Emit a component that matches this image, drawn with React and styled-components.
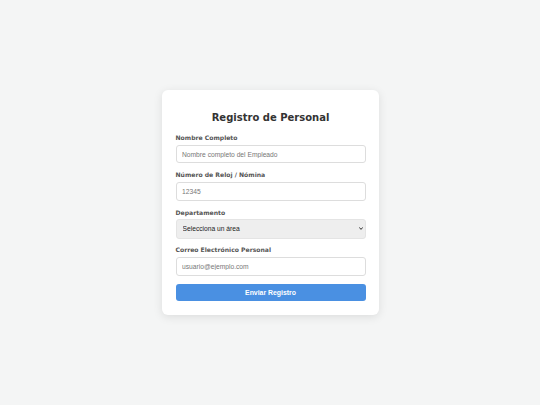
import React from 'react'
import styled, { createGlobalStyle } from 'styled-components'

const GlobalStyle = createGlobalStyle`
    html, body {
        margin: 0;
        padding: 0;
    }
    body {
        background-color: #f4f5f5;
        font-family: 'DejaVu Sans', Verdana, sans-serif;
    }
`;

const Page = styled.div`
    width: 100vw;
    height: 100vh;
    display: flex;
    align-items: center;
    justify-content: center;
`;

const Card = styled.form`
    width: 217px;
    box-sizing: border-box;
    background-color: #ffffff;
    border-radius: 6px;
    box-shadow: 0 2px 10px rgba(0, 0, 0, 0.1);
    padding: 21.5px 13px 13.5px 14px;
    display: flex;
    flex-direction: column;
`;

const Title = styled.h2`
    margin: 0 0 10px 0;
    font-size: 10px;
    line-height: 12px;
    font-weight: bold;
    color: #333333;
    text-align: center;
`;

const Group = styled.div`
    display: flex;
    flex-direction: column;
    margin-bottom: ${(p) => p.$gap || 8}px;
`;

const Label = styled.label`
    font-size: 6.1px;
    line-height: 7px;
    font-weight: bold;
    color: #555555;
    margin-bottom: ${(p) => p.$space || 4}px;
`;

const Input = styled.input`
    box-sizing: border-box;
    width: 100%;
    height: 18.5px;
    padding: 0 5.5px;
    border: 1px solid #dddddd;
    border-radius: 3px;
    background: #ffffff;
    font-family: 'Liberation Sans', Arial, sans-serif;
    font-size: 6.7px;
    color: #333;
    outline: none;

    &::placeholder {
        color: #777777;
    }
`;

const SelectWrap = styled.div`
    position: relative;
    display: flex;
`;

const Select = styled.select`
    display: block;
    box-sizing: border-box;
    width: 100%;
    height: 20px;
    margin: 0;
    padding: 0 6px;
    border: 1px solid #e4e4e4;
    border-radius: 3px;
    background-color: #eeeeee;
    font-family: 'Liberation Sans', Arial, sans-serif;
    font-size: 6.7px;
    color: #222;
    appearance: none;
    outline: none;
`;

const Caret = styled.svg`
    position: absolute;
    right: 3px;
    top: 8px;
    pointer-events: none;
`;

const Button = styled.button`
    height: 17.5px;
    padding: 0;
    border: none;
    border-radius: 3px;
    background-color: #4a90e2;
    color: #ffffff;
    font-family: 'Liberation Sans', Arial, sans-serif;
    font-size: 6.9px;
    font-weight: bold;
    cursor: pointer;
`;

const App = () => {
    return (
        <>
            <GlobalStyle />
            <Page>
                <Card onSubmit={(e) => e.preventDefault()}>
                    <Title>Registro de Personal</Title>
                    <Group>
                        <Label>Nombre Completo</Label>
                        <Input placeholder="Nombre completo del Empleado" />
                    </Group>
                    <Group>
                        <Label>Número de Reloj / Nómina</Label>
                        <Input placeholder="12345" />
                    </Group>
                    <Group $gap={7.5}>
                        <Label $space={3}>Departamento</Label>
                        <SelectWrap>
                            <Select defaultValue="">
                                <option value="">Selecciona un área</option>
                            </Select>
                            <Caret width="4" height="3" viewBox="0 0 4 3">
                                <path d="M0.3 0.4 L2 2.4 L3.7 0.4" fill="none" stroke="#333" strokeWidth="1" />
                            </Caret>
                        </SelectWrap>
                    </Group>
                    <Group>
                        <Label>Correo Electrónico Personal</Label>
                        <Input placeholder="usuario@ejemplo.com" />
                    </Group>
                    <Button type="submit">Enviar Registro</Button>
                </Card>
            </Page>
        </>
    )
}

export default App
